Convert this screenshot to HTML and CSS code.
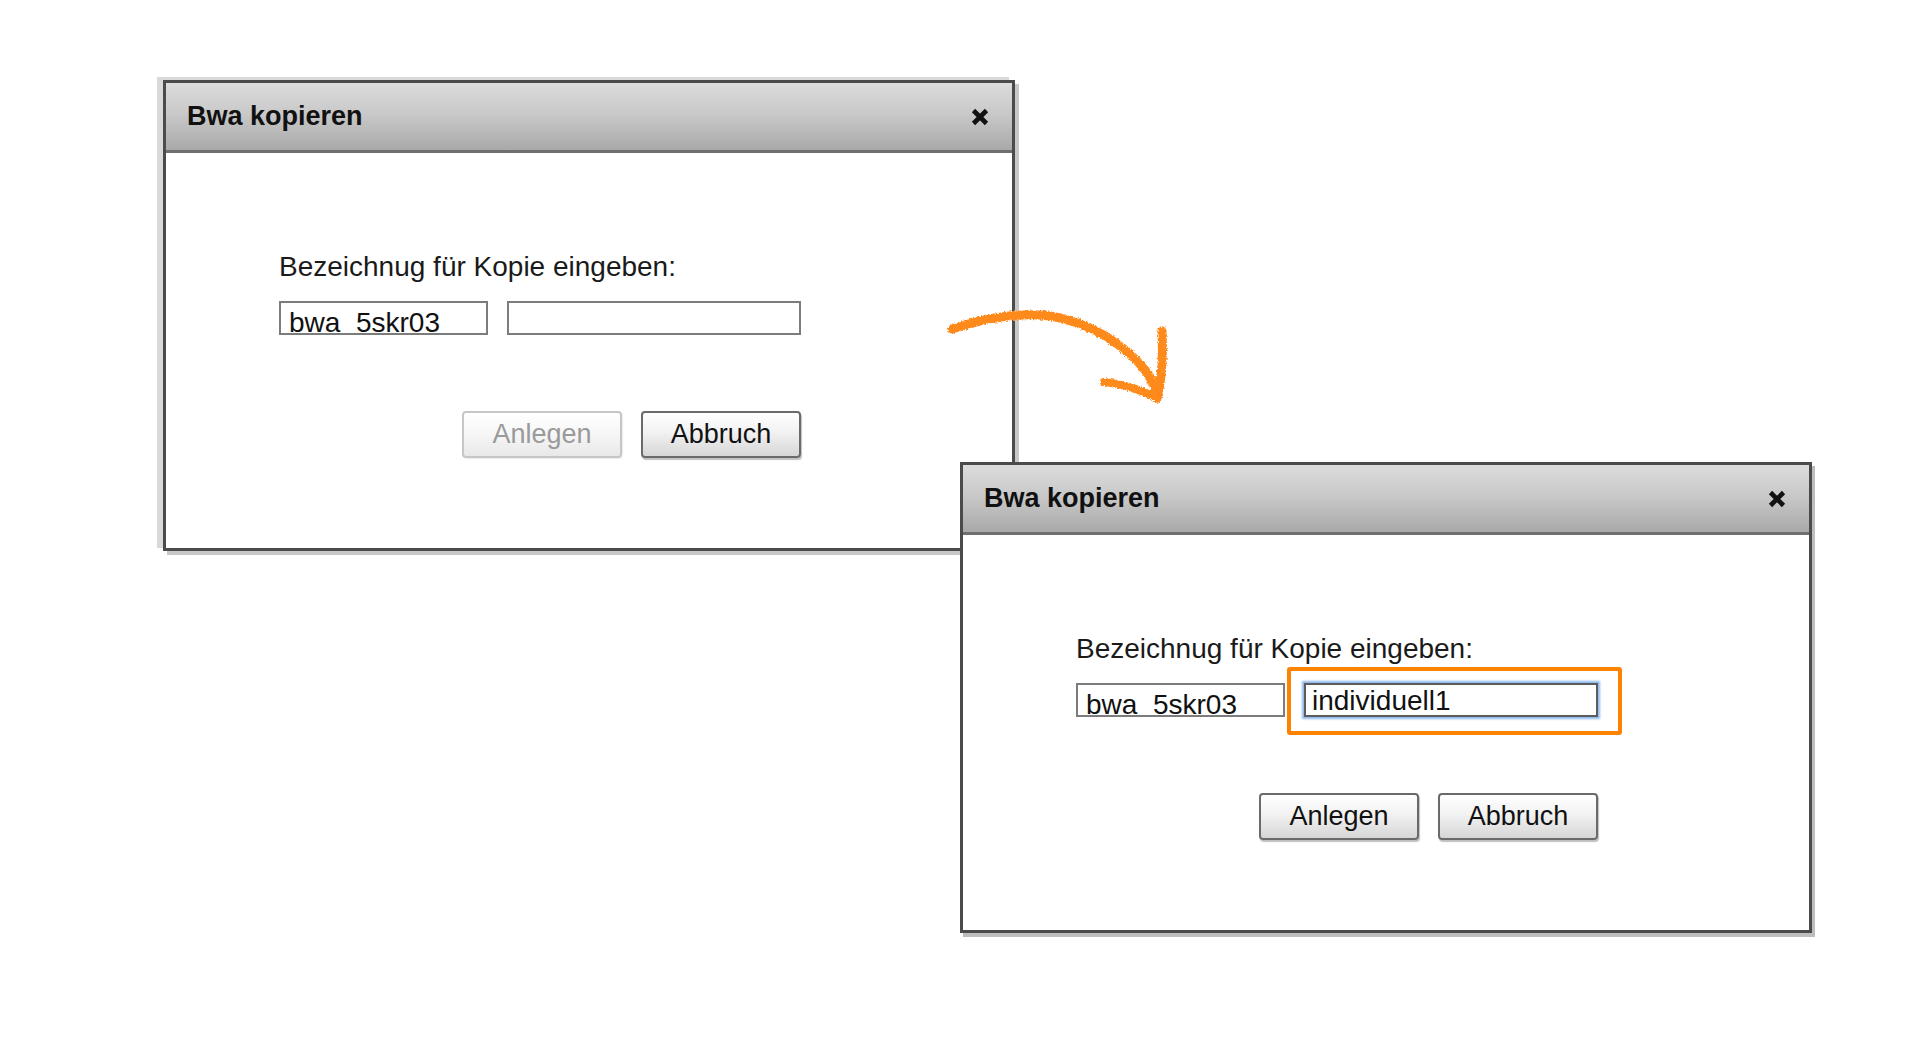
FILE: index.html
```html
<!DOCTYPE html>
<html lang="de">
<head>
<meta charset="utf-8">
<title>Bwa kopieren</title>
<link rel="stylesheet" href="styles.css">
</head>
<body>
<div class="desk">
  <section class="dialog dialog-a">
    <header class="titlebar">
      <span class="title">Bwa kopieren</span>
      <svg class="close" viewBox="0 0 20 20" width="20" height="20"><path d="M3.5 3.5 L16.5 16.5 M16.5 3.5 L3.5 16.5" stroke="#111" stroke-width="4.6" fill="none"/></svg>
    </header>
    <div class="body">
      <div class="label">Bezeichnug für Kopie eingeben:</div>
      <div class="fields">
        <div class="field short">bwa_5skr03</div>
        <div class="wrap"><div class="field long"></div></div>
      </div>
      <div class="actions">
        <button class="btn disabled">Anlegen</button>
        <button class="btn">Abbruch</button>
      </div>
    </div>
  </section>

  <section class="dialog dialog-b">
    <header class="titlebar">
      <span class="title">Bwa kopieren</span>
      <svg class="close" viewBox="0 0 20 20" width="20" height="20"><path d="M3.5 3.5 L16.5 16.5 M16.5 3.5 L3.5 16.5" stroke="#111" stroke-width="4.6" fill="none"/></svg>
    </header>
    <div class="body">
      <div class="label">Bezeichnug für Kopie eingeben:</div>
      <div class="fields">
        <div class="field short">bwa_5skr03</div>
        <div class="wrap">
          <div class="field long focus">individuell1</div>
          <span class="highlight"></span>
        </div>
      </div>
      <div class="actions">
        <button class="btn">Anlegen</button>
        <button class="btn">Abbruch</button>
      </div>
    </div>
  </section>

  <svg class="arrow" viewBox="0 0 1920 1040" width="1920" height="1040">
    <defs>
      <filter id="rough" x="-10%" y="-10%" width="120%" height="120%">
        <feTurbulence type="fractalNoise" baseFrequency="0.6" numOctaves="2" seed="3" result="n"/>
        <feDisplacementMap in="SourceGraphic" in2="n" scale="4" xChannelSelector="R" yChannelSelector="G"/>
      </filter>
    </defs>
    <g filter="url(#rough)" fill="none" stroke="#ff8a1c" stroke-linecap="round" stroke-linejoin="round">
      <path d="M952 329 C985 318 1020 312 1050 316 C1090 322 1125 345 1145 370 C1153 381 1157 392 1157 398" stroke-width="9"/>
      <path d="M1162 331 C1163 352 1162 378 1157 398" stroke-width="9"/>
      <path d="M1104 382 C1122 384 1142 390 1157 398" stroke-width="8"/>
    </g>
  </svg>
</div>
</body>
</html>
```

FILE: styles.css
```css
html, body {
  margin: 0;
  padding: 0;
  background: #ffffff;
}

body {
  width: 1920px;
  height: 1040px;
  overflow: hidden;
}

.desk {
  position: relative;
  width: 1920px;
  height: 1040px;
  font-family: "Liberation Sans", Arial, sans-serif;
  color: #151515;
}

.dialog {
  position: absolute;
  width: 852px;
  height: 471px;
  box-sizing: border-box;
  border: 3px solid #4b4b4b;
  background: #ffffff;
  display: flex;
  flex-direction: column;
}

.dialog-a {
  left: 163px;
  top: 80px;
  box-shadow: -6px -3px 0 0 #d9d9d9, 4px 4px 0 0 #c8c8c8;
}

.dialog-b {
  left: 960px;
  top: 462px;
  box-shadow: 3px 4px 0 0 #bdbdbd;
}

.titlebar {
  flex: none;
  height: 67px;
  border-bottom: 3px solid #6f6f6f;
  background: linear-gradient(#dcdcdc 0%, #c9c9c9 45%, #a9a9a9 100%);
  display: flex;
  align-items: center;
  justify-content: space-between;
  padding: 0 22px 0 21px;
}

.title {
  font-weight: bold;
  font-size: 27px;
  color: #111111;
}

.close {
  display: block;
}

.body {
  padding: 98px 0 0 113px;
}

.label {
  font-size: 28px;
  line-height: 32px;
  color: #1a1a1a;
}

.fields {
  display: flex;
  gap: 19px;
  margin-top: 18px;
}

.wrap {
  position: relative;
}

.field {
  box-sizing: border-box;
  height: 34px;
  border: 2px solid #7c7c7c;
  background: #ffffff;
  font-size: 28px;
  line-height: 32px;
  padding: 4px 0 0 8px;
  overflow: hidden;
  white-space: nowrap;
  color: #111111;
}

.short {
  width: 209px;
}

.long {
  width: 294px;
}

.field.focus {
  padding: 0 0 0 6px;
  border-color: #5c5c5c;
  box-shadow: 0 0 2px 2px #8db8ee;
}

.highlight {
  position: absolute;
  top: -16px;
  bottom: -18px;
  left: -17px;
  right: -24px;
  border: 4px solid #ff8300;
  border-radius: 3px;
  pointer-events: none;
}

.actions {
  display: flex;
  justify-content: flex-end;
  gap: 19px;
  width: 522px;
  margin-top: 76px;
}

.btn {
  width: 160px;
  height: 47px;
  box-sizing: border-box;
  padding: 0;
  border: 2px solid #6a6a6a;
  border-radius: 4px;
  background: linear-gradient(#ffffff 0%, #f2f2f2 45%, #d6d6d6 100%);
  font-family: "Liberation Sans", Arial, sans-serif;
  font-size: 27px;
  color: #111111;
  box-shadow: 1px 2px 1px rgba(0, 0, 0, 0.25);
}

.btn.disabled {
  border-color: #c6c6c6;
  color: #9a9a9a;
  background: linear-gradient(#ffffff 0%, #f6f6f6 50%, #e8e8e8 100%);
  box-shadow: 1px 1px 1px rgba(0, 0, 0, 0.08);
}

.arrow {
  position: absolute;
  left: 0;
  top: 0;
  pointer-events: none;
}
```
